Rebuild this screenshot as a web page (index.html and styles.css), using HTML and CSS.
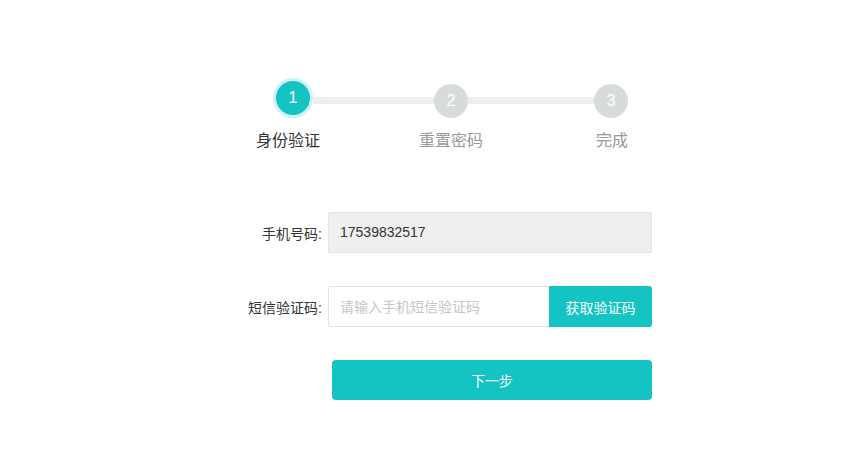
FILE: index.html
```html
<!DOCTYPE html>
<html lang="zh-CN">
<head>
<meta charset="utf-8">
<title>找回密码</title>
<link rel="stylesheet" href="styles.css">
</head>
<body>
<div class="page">
  <div class="steps">
    <div class="track">
      <div class="dot dot-active">1</div>
      <div class="bar bar-first"></div>
      <div class="dot">2</div>
      <div class="bar bar-second"></div>
      <div class="dot">3</div>
    </div>
    <div class="labels">
      <div class="label label-active">身份验证</div>
      <div class="label">重置密码</div>
      <div class="label">完成</div>
    </div>
  </div>

  <div class="form">
    <div class="row">
      <div class="row-label">手机号码:</div>
      <div class="field field-disabled">17539832517</div>
    </div>
    <div class="row">
      <div class="row-label">短信验证码:</div>
      <div class="group">
        <input class="field field-input" type="text" placeholder="请输入手机短信验证码">
        <button class="code-btn" type="button">获取验证码</button>
      </div>
    </div>
    <button class="next-btn" type="button">下一步</button>
  </div>
</div>
</body>
</html>
```

FILE: styles.css
```css
* { box-sizing: border-box; }
html, body {
  margin: 0;
  padding: 0;
  background: #ffffff;
}
body {
  font-family: "Liberation Sans", "Noto Sans CJK SC", sans-serif;
  color: #333333;
}
.page {
  width: 848px;
  height: 474px;
  padding-top: 78px;
}
.steps {
  margin-left: 250px;
  width: 402px;
}
.track {
  display: flex;
  align-items: flex-end;
  margin-left: 23px;
  width: 355px;
}
.dot {
  width: 34px;
  height: 34px;
  border-radius: 50%;
  background: #d8dbdc;
  color: #ffffff;
  font-size: 16px;
  line-height: 34px;
  text-align: center;
  flex: none;
}
.dot-active {
  width: 40px;
  height: 40px;
  border: 3px solid #cdf2f1;
  background: #13c4c3;
  line-height: 34px;
}
.bar {
  height: 7px;
  margin-bottom: 14px;
  background: #eeeeee;
  flex: none;
}
.bar-first { width: 121px; }
.bar-second { width: 126px; }
.labels {
  display: flex;
  gap: 81px;
  margin-top: 12px;
}
.label {
  width: 80px;
  text-align: center;
  font-size: 16px;
  line-height: 22px;
  color: #999999;
}
.label-active {
  color: #333333;
  margin-left: -2px;
  margin-right: 2px;
}
.form {
  margin-left: 240px;
  width: 412px;
  margin-top: 60px;
}
.row {
  display: flex;
  align-items: center;
  gap: 6px;
  margin-bottom: 33px;
}
.row-label {
  width: 82px;
  text-align: right;
  font-size: 14px;
  color: #333333;
  white-space: nowrap;
}
.field {
  width: 324px;
  height: 41px;
  border: 1px solid #e3e3e3;
  border-radius: 2px;
  padding: 0 11px;
  font-family: "Liberation Sans", "Noto Sans CJK SC", sans-serif;
  font-size: 14px;
  line-height: 39px;
  color: #333333;
}
.field-disabled {
  background: #efefef;
}
.group {
  display: flex;
  width: 324px;
}
.field-input {
  width: 221px;
  border-right: none;
  border-radius: 2px 0 0 2px;
  outline: none;
  background: #ffffff;
}
.field-input::placeholder {
  color: #c6c6c6;
}
.code-btn {
  width: 103px;
  height: 41px;
  border: none;
  border-radius: 0 3px 3px 0;
  background: #13c4c3;
  color: #ffffff;
  font-family: "Liberation Sans", "Noto Sans CJK SC", sans-serif;
  font-size: 14px;
  padding: 0;
}
.next-btn {
  display: block;
  margin-left: 92px;
  width: 320px;
  height: 40px;
  border: none;
  border-radius: 4px;
  background: #13c4c3;
  color: #ffffff;
  font-family: "Liberation Sans", "Noto Sans CJK SC", sans-serif;
  font-size: 14px;
  padding: 0;
}
```
